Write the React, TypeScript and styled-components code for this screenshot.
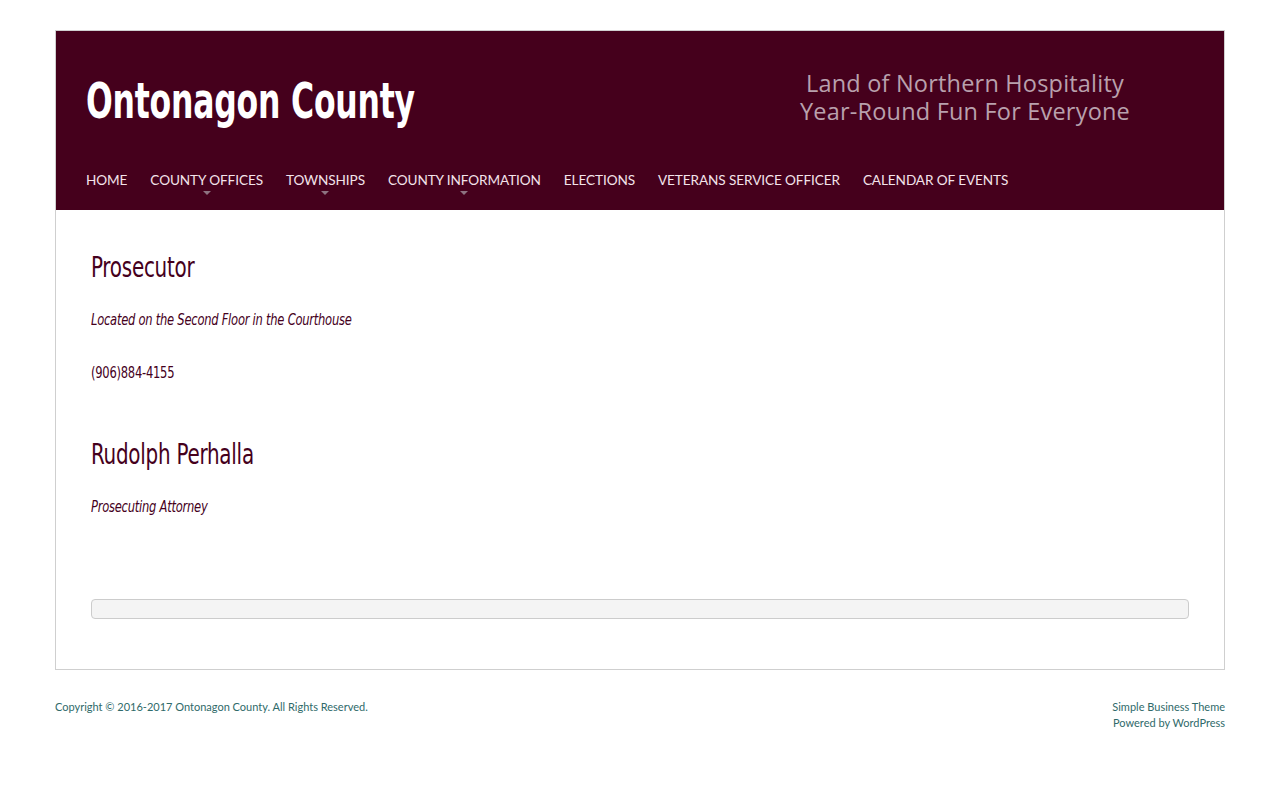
import React from "react";
import styled, { createGlobalStyle } from "styled-components";

const Global = createGlobalStyle`
  html, body { margin: 0; padding: 0; background: #fff; }
  body { font-family: "DejaVu Sans Condensed", "Roboto", sans-serif; color: #45001c; }
`;

const Page = styled.div`
  width: 1170px;
  margin: 30px auto 0;
`;

const Frame = styled.div`
  border: 1px solid #cfcfcf;
  background: #fff;
`;

const Header = styled.header`
  background: #45001c;
  padding: 0 30px;
  height: 179px;
  display: flex;
  flex-direction: column;
`;

const TopRow = styled.div`
  display: flex;
  justify-content: space-between;
  align-items: flex-start;
  height: 139px;
`;

const SiteTitle = styled.h1`
  margin: 42px 0 0;
  font-family: "DejaVu Sans Condensed", sans-serif;
  font-weight: 700;
  font-size: 50px;
  line-height: 56px;
  color: #fff;
  letter-spacing: -0.3px;
  transform: scaleX(0.7);
  transform-origin: left center;
  white-space: nowrap;
`;

const Tagline = styled.div`
  margin: 40px 64px 0 0;
  display: flex;
  flex-direction: column;
  align-items: center;
  gap: 4px;
  font-family: "Open Sans", "Lato", sans-serif;
  font-size: 23.5px;
  line-height: 24px;
  letter-spacing: 0.2px;
  color: #b9a1ad;
`;

const TaglineLine = styled.div`
  white-space: nowrap;
`;

const Nav = styled.nav`
  display: flex;
  gap: 23px;
`;

const NavItem = styled.a`
  position: relative;
  font-family: "Lato", "Noto Sans", sans-serif;
  font-size: 13.6px;
  color: #f3e3ea;
  text-transform: uppercase;
  text-decoration: none;
  line-height: 20px;
  letter-spacing: -0.1px;
  padding-bottom: 10px;
`;

const Caret = styled.span`
  position: absolute;
  left: 50%;
  top: 21px;
  margin-left: -4px;
  width: 0;
  height: 0;
  border-left: 4px solid transparent;
  border-right: 4px solid transparent;
  border-top: 4px solid #8d7280;
`;

const Content = styled.main`
  padding: 40px 35px 50px;
`;

const Heading = styled.h2`
  margin: 0;
  font-family: "DejaVu Sans Condensed", sans-serif;
  font-weight: 400;
  font-size: 28px;
  line-height: 36px;
  color: #45001c;
  letter-spacing: -0.3px;
  transform: scaleX(0.79);
  transform-origin: left center;
  white-space: nowrap;
`;

const Italic = styled.p`
  margin: 23px 0 0;
  font-style: italic;
  font-size: 16px;
  line-height: 22px;
  color: #45001c;
  letter-spacing: -0.3px;
  transform: scaleX(0.8);
  transform-origin: left center;
  white-space: nowrap;
`;

const Plain = styled.p`
  margin: 31px 0 0;
  font-size: 16px;
  line-height: 22px;
  color: #45001c;
  letter-spacing: -0.3px;
  transform: scaleX(0.8);
  transform-origin: left center;
  white-space: nowrap;
`;

const Section = styled.section<{ $gap?: number }>`
  margin-top: ${(p) => p.$gap ?? 0}px;
`;

const Well = styled.div`
  margin-top: 81px;
  height: 18px;
  background: #f4f4f4;
  border: 1px solid #cccccc;
  border-radius: 4px;
`;

const Footer = styled.footer`
  display: flex;
  justify-content: space-between;
  padding-top: 29px;
  font-family: "Source Sans Pro", "Lato", "Noto Sans", sans-serif;
  font-size: 11px;
  line-height: 16px;
  color: #2f6a6a;
`;

const FooterRight = styled.div`
  text-align: right;
`;

const navItems: { label: string; drop?: boolean }[] = [
  { label: "Home" },
  { label: "County Offices", drop: true },
  { label: "Townships", drop: true },
  { label: "County Information", drop: true },
  { label: "Elections" },
  { label: "Veterans Service Officer" },
  { label: "Calendar of Events" },
];

export default function App() {
  return (
    <>
      <Global />
      <Page>
        <Frame>
          <Header>
            <TopRow>
              <SiteTitle>Ontonagon County</SiteTitle>
              <Tagline>
                <TaglineLine>Land of Northern Hospitality</TaglineLine>
                <TaglineLine>Year-Round Fun For Everyone</TaglineLine>
              </Tagline>
            </TopRow>
            <Nav>
              {navItems.map((n) => (
                <NavItem key={n.label} href="#">
                  {n.label}
                  {n.drop && <Caret />}
                </NavItem>
              ))}
            </Nav>
          </Header>
          <Content>
            <Section>
              <Heading>Prosecutor</Heading>
              <Italic>Located on the Second Floor in the Courthouse</Italic>
              <Plain>(906)884-4155</Plain>
            </Section>
            <Section $gap={53}>
              <Heading>Rudolph Perhalla</Heading>
              <Italic>Prosecuting Attorney</Italic>
            </Section>
            <Well />
          </Content>
        </Frame>
        <Footer>
          <div>Copyright © 2016-2017 Ontonagon County. All Rights Reserved.</div>
          <FooterRight>
            Simple Business Theme
            <br />
            Powered by WordPress
          </FooterRight>
        </Footer>
      </Page>
    </>
  );
}
